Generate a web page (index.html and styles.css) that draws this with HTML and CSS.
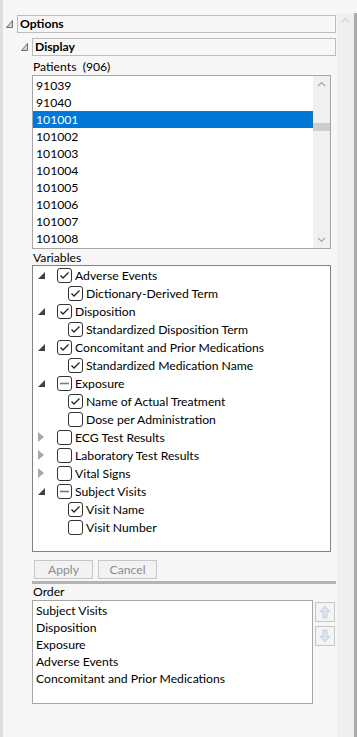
FILE: index.html
```html
<!DOCTYPE html>
<html lang="en">
<head>
    <meta charset="UTF-8">
    <meta name="viewport" content="width=device-width, initial-scale=1.0">
    <title>Options</title>
    <link rel="stylesheet" href="styles.css">
</head>
<body>
    <div class="window">
        <div class="panel">
            <div class="outline-row top">
                <svg class="outline-arrow" width="7" height="8" viewBox="0 0 7 8"><polygon points="6.5,0.5 6.5,7.5 0.5,7.5" fill="#d4d4d4" stroke="#6e6e6e"/></svg>
                <div class="outline-title">Options</div>
            </div>
            <div class="section">
                <div class="outline-row">
                    <svg class="outline-arrow" width="7" height="8" viewBox="0 0 7 8"><polygon points="6.5,0.5 6.5,7.5 0.5,7.5" fill="#d4d4d4" stroke="#6e6e6e"/></svg>
                    <div class="outline-title">Display</div>
                </div>

                <div class="content">
                    <div class="label">Patients&nbsp; (906)</div>
                    <div class="listbox patients">
                        <div class="rows">
                            <div class="row">91039</div>
                            <div class="row">91040</div>
                            <div class="row selected">101001</div>
                            <div class="row">101002</div>
                            <div class="row">101003</div>
                            <div class="row">101004</div>
                            <div class="row">101005</div>
                            <div class="row">101006</div>
                            <div class="row">101007</div>
                            <div class="row">101008</div>
                        </div>
                        <div class="scrollbar">
                            <svg width="17" height="17" viewBox="0 0 17 17"><polyline points="5,10 8.5,6.5 12,10" fill="none" stroke="#a6a6a6" stroke-width="1.2"/></svg>
                            <div class="track"><div class="thumb"></div></div>
                            <svg width="17" height="17" viewBox="0 0 17 17"><polyline points="5,7 8.5,10.5 12,7" fill="none" stroke="#a6a6a6" stroke-width="1.2"/></svg>
                        </div>
                    </div>

                    <div class="label vars">Variables</div>
                    <div class="tree" id="tree"></div>

                    <div class="actions">
                        <button class="btn apply" disabled>Apply</button>
                        <button class="btn cancel" disabled>Cancel</button>
                    </div>
                    <div class="separator"></div>

                    <div class="label order-label">Order</div>
                    <div class="order-wrap">
                        <div class="listbox order">
                            <div class="row">Subject Visits</div>
                            <div class="row">Disposition</div>
                            <div class="row">Exposure</div>
                            <div class="row">Adverse Events</div>
                            <div class="row">Concomitant and Prior Medications</div>
                        </div>
                        <div class="move-buttons">
                            <div class="move">
                                <svg width="12" height="14" viewBox="0 0 12 14"><polygon points="6,1 11,6.5 8,6.5 8,13 4,13 4,6.5 1,6.5" fill="#dbe3ee" stroke="#c4cfdd"/></svg>
                            </div>
                            <div class="move">
                                <svg width="12" height="14" viewBox="0 0 12 14"><polygon points="6,13 11,7.5 8,7.5 8,1 4,1 4,7.5 1,7.5" fill="#dbe3ee" stroke="#c4cfdd"/></svg>
                            </div>
                        </div>
                    </div>
                </div>
            </div>
        </div>
        <div class="vscroll">
            <div class="vtrack">
                <svg width="17" height="17" viewBox="0 0 17 17"><polyline points="5,9 8.5,5.5 12,9" fill="none" stroke="#d0d0d0" stroke-width="1.2"/></svg>
            </div>
            <div class="vbar"></div>
        </div>
    </div>

    <script>
        // tree of variables: level, state (checked / mixed / empty), expander (open / closed / none)
        const items = [
            [0, 'checked', 'open', 'Adverse Events'],
            [1, 'checked', 'none', 'Dictionary-Derived Term'],
            [0, 'checked', 'open', 'Disposition'],
            [1, 'checked', 'none', 'Standardized Disposition Term'],
            [0, 'checked', 'open', 'Concomitant and Prior Medications'],
            [1, 'checked', 'none', 'Standardized Medication Name'],
            [0, 'mixed', 'open', 'Exposure'],
            [1, 'checked', 'none', 'Name of Actual Treatment'],
            [1, 'empty', 'none', 'Dose per Administration'],
            [0, 'empty', 'closed', 'ECG Test Results'],
            [0, 'empty', 'closed', 'Laboratory Test Results'],
            [0, 'empty', 'closed', 'Vital Signs'],
            [0, 'mixed', 'open', 'Subject Visits'],
            [1, 'checked', 'none', 'Visit Name'],
            [1, 'empty', 'none', 'Visit Number']
        ];

        const expanders = {
            open: '<svg width="7" height="7" viewBox="0 0 7 7"><polygon points="7,0 7,7 0,7" fill="#404040"/></svg>',
            closed: '<svg width="6" height="10" viewBox="0 0 6 10"><polygon points="0,0 6,5 0,10" fill="#a8a8a8"/></svg>',
            none: ''
        };

        const marks = {
            checked: '<polyline points="3.5,7.5 6,10 11.5,4.5" fill="none" stroke="#222" stroke-width="1.3"/>',
            mixed: '<line x1="3" y1="7.5" x2="12" y2="7.5" stroke="#7a7a7a" stroke-width="1.6"/>',
            empty: ''
        };

        const tree = document.getElementById('tree');
        items.forEach(([level, state, exp, text]) => {
            const row = document.createElement('div');
            row.className = 'node level-' + level;
            row.innerHTML =
                '<span class="expander">' + expanders[exp] + '</span>' +
                '<svg class="check" width="15" height="15" viewBox="0 0 15 15">' +
                '<rect x="0.5" y="0.5" width="14" height="14" rx="2.5" fill="#fff" stroke="#333"/>' +
                marks[state] + '</svg>' +
                '<span class="node-text">' + text + '</span>';
            tree.appendChild(row);
        });
    </script>
</body>
</html>
```

FILE: styles.css
```css
body {
    margin: 0;
    background-color: #f7f7f7;
    font-family: Lato, "Noto Sans", sans-serif;
    font-size: 12.2px;
    color: #000;
}

.window {
    display: flex;
    height: 737px;
    overflow: hidden;
}

.panel {
    flex: 1;
    border-left: 3px solid #dedede;
    padding-right: 1px;
}

.outline-row {
    display: flex;
    align-items: center;
    height: 18px;
}

.outline-row.top {
    margin-top: 15px;
    padding-left: 3px;
}

.outline-arrow {
    width: 7px;
    margin-right: 4px;
    flex-shrink: 0;
}

.outline-title {
    flex: 1;
    height: 16px;
    line-height: 16px;
    border: 1px solid #bcbcbc;
    padding-left: 2px;
    font-weight: bold;
}

.section {
    padding-left: 15px;
    margin-top: 5px;
}

.section > .outline-row {
    padding-left: 3px;
}

.content {
    padding-left: 14px;
    margin-top: 2px;
}

.label {
    height: 17px;
    line-height: 17px;
    padding-left: 1px;
}

.listbox {
    background: #fff;
    border: 1px solid #a6a6a6;
}

.patients {
    display: flex;
    width: 297px;
    height: 172px;
}

.rows {
    flex: 1;
    padding-top: 1px;
}

.row {
    height: 17px;
    line-height: 17px;
    padding-left: 3px;
    white-space: nowrap;
}

.row.selected {
    background: #0078d7;
    color: #fff;
}

.scrollbar {
    width: 17px;
    background: #f0f0f0;
    display: flex;
    flex-direction: column;
}

.scrollbar svg {
    display: block;
}

.track {
    flex: 1;
}

.thumb {
    margin-top: 30px;
    height: 8px;
    background: #cdcdcd;
}

.tree {
    width: 297px;
    height: 285px;
    background: #fff;
    border: 1px solid #828282;
    margin-top: -1px;
}

.node {
    display: flex;
    align-items: center;
    height: 18px;
    white-space: nowrap;
}

.expander {
    width: 11px;
    display: flex;
    align-items: center;
    margin-left: 5px;
    margin-right: 8px;
}

.level-1 .expander {
    margin-left: 16px;
}

.check {
    flex-shrink: 0;
    margin-top: 1px;
}

.node-text {
    margin-left: 3px;
}

.actions {
    display: flex;
    gap: 5px;
    margin-top: 8px;
    padding-left: 2px;
}

.btn {
    width: 59px;
    height: 19px;
    border: 1px solid #c6c6c6;
    background: #f2f2f2;
    color: #8c8c8c;
    font-family: inherit;
    font-size: 12.2px;
    padding: 0;
    line-height: 16px;
}

.separator {
    height: 3px;
    background: #b4b4b4;
    margin-top: 2px;
}

.order-label {
    height: 16px;
    line-height: 16px;
}

.order-wrap {
    display: flex;
    gap: 2px;
}

.order {
    width: 279px;
    height: 101px;
    padding-top: 1px;
}

.move-buttons {
    display: flex;
    flex-direction: column;
    gap: 4px;
    margin-top: 2px;
}

.move {
    width: 18px;
    height: 18px;
    border: 1px solid #c6c6c6;
    background: #f4f4f4;
    display: flex;
    align-items: center;
    justify-content: center;
}

.vscroll {
    width: 20px;
    display: flex;
    margin-top: 13px;
}

.vtrack {
    width: 17px;
    background: #efefef;
}

.vtrack svg {
    display: block;
}

.vbar {
    width: 3px;
    background: #ababab;
}
```
